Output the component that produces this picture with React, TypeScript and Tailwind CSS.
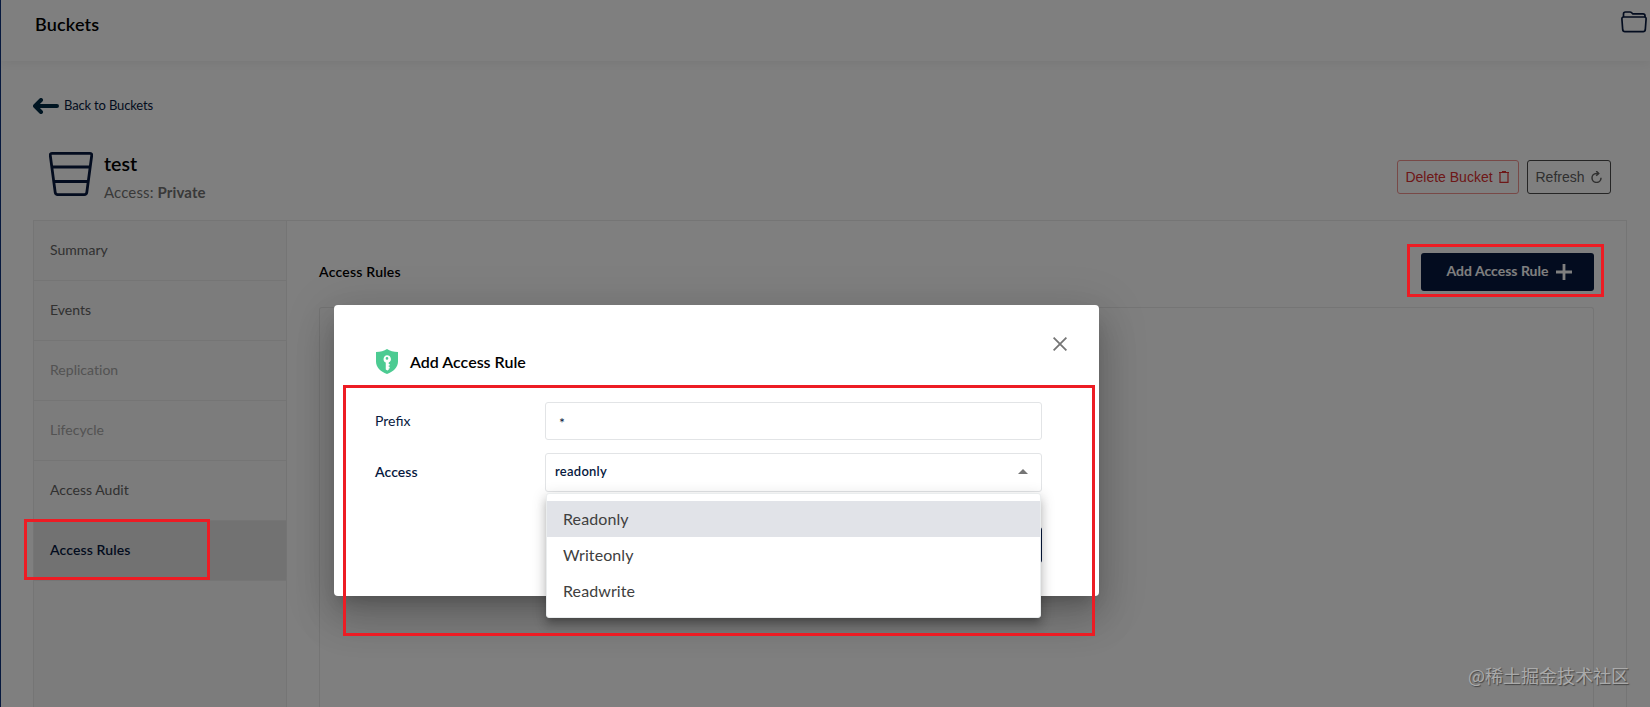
const tabs = [
  { label: "Summary" },
  { label: "Events" },
  { label: "Replication", disabled: true },
  { label: "Lifecycle", disabled: true },
  { label: "Access Audit" },
  { label: "Access Rules", selected: true },
];

const options = ["Readonly", "Writeonly", "Readwrite"];

function tabClass(tab: { disabled?: boolean; selected?: boolean }) {
  if (tab.selected) return "bg-[#e5e5e5] font-semibold tracking-[0.008em] text-[#07193e]";
  if (tab.disabled) return "tracking-[0.002em] text-[#a6a6a6]";
  return "tracking-[0.002em] text-[#626262]";
}

function BucketIcon() {
  return (
    <svg width="44" height="44" viewBox="0 0 44 44" fill="none" stroke="#07193e" strokeWidth="2.800" strokeLinejoin="round">
      <path d="M3.200 1.400h37.600q2.200 0 1.900 2.200l-4.900 36.800q-.3 2.200-2.500 2.200H8.700q-2.200 0-2.500-2.200l-4.900-36.800q-.3-2.200 1.900-2.200z" />
      <path d="M3.400 15h37.200M5.400 29.500h33.200" />
    </svg>
  );
}

function Header() {
  return (
    <header className="relative flex h-[61px] justify-between bg-white pl-[34px] shadow-[0_3px_10px_rgba(0,0,0,0.06)]">
      <h1 className="pt-2.5 text-[18px] leading-7 font-semibold tracking-[0.01em] text-black">Buckets</h1>
      <svg className="mt-[11px] mr-[3px]" width="26" height="22" viewBox="0 0 26 22" fill="none" stroke="#07193e" strokeWidth="1.700" strokeLinejoin="round">
        <path d="M2.500 6V3q0-2 2-2h4.500q1 0 1.700.8l.9 1H22q2 0 2 2V6" />
        <path d="M2.800 6h20.400q2 0 1.900 2l-.8 10.700q-.2 2-2.200 2H3.900q-2 0-2.200-2L.9 8Q.8 6 2.800 6z" />
      </svg>
    </header>
  );
}

function BucketHeading() {
  return (
    <div className="flex h-[68px] items-start justify-between pr-4 pl-4">
      <div className="flex">
        <BucketIcon />
        <div className="pl-[11px]">
          <h2 className="h-[26px] text-[19.500px] leading-6 font-semibold text-black">test</h2>
          <p className="mt-px text-[15px] leading-[26px] tracking-[0.008em] text-[#737373]">
            Access: <b>Private</b>
          </p>
        </div>
      </div>
      <div className="mt-2 flex gap-2 font-['Liberation_Sans',sans-serif] text-[14px]">
        <button className="flex h-[34px] w-[122px] items-center justify-center gap-1.5 rounded-[3px] border border-[#f0928e] pr-0.5 text-[#dc3030]">
          Delete Bucket
          <svg width="10" height="12" viewBox="0 0 10 12" fill="none" stroke="currentColor" strokeWidth="1.200">
            <path d="M0 1.500h10M3 .6h4M1 1.500v9.900h8V1.500" />
          </svg>
        </button>
        <button className="flex h-[34px] w-[84px] items-center justify-center gap-1.5 rounded-[3px] border border-[#4a4a4a] pr-px text-[#606060]">
          Refresh
          <svg width="11" height="12" viewBox="0 0 11 12" fill="none" stroke="currentColor" strokeWidth="1.500">
            <path d="M7.500 2.400H5.400A4.500 4.500 0 1 0 10 6.800" />
            <path d="M5.200 0l2.500 2.400-2.500 2.400" />
          </svg>
        </button>
      </div>
    </div>
  );
}

function Panel() {
  return (
    <div className="flex h-[487px] border border-b-0 border-[#eaeaea]">
      <nav className="w-[253px] shrink-0 border-r border-[#eaeaea] bg-[#f8f8f8]">
        {tabs.map((tab) => (
          <div key={tab.label} className={`flex h-[60px] items-center border-b border-[#eaeaea] pb-0.5 pl-4 text-[14px] ${tabClass(tab)}`}>
            {tab.label}
          </div>
        ))}
      </nav>
      <div className="flex flex-1 flex-col px-8 pt-8">
        <div className="flex h-[54px] items-start justify-between">
          <h3 className="pt-[9px] text-[14px] leading-5 font-semibold tracking-[0.016em] text-black">Access Rules</h3>
          <button className="flex h-[38px] w-[173px] items-center justify-center gap-2 rounded-[3px] bg-[#07193e] pb-px pl-1 text-[14px] font-bold text-white">
            <span className="pb-0.5">Add Access Rule</span>
            <svg width="16" height="16" viewBox="0 0 16 16" stroke="currentColor" strokeWidth="2.800">
              <path d="M8 0v16M0 8h16" />
            </svg>
          </button>
        </div>
        <div className="flex-1 rounded-t-[3px] border border-b-0 border-[#eaeaea]" />
      </div>
    </div>
  );
}

function Dialog() {
  return (
    <div className="absolute top-[305px] left-[333px] h-[291px] w-[765px] rounded bg-white pt-11 pl-[41px] shadow-[0_11px_15px_-7px_rgba(0,0,0,0.2),0_24px_38px_3px_rgba(0,0,0,0.14),0_9px_46px_8px_rgba(0,0,0,0.12)]">
      <svg className="absolute top-8 right-8" width="14" height="14" viewBox="0 0 14 14" stroke="#757575" strokeWidth="1.800">
        <path d="M.6.6l12.800 12.800M13.400.6L.6 13.400" />
      </svg>
      <div className="flex h-[53px] gap-[11px] pl-px">
        <svg width="22" height="25" viewBox="0 0 23 26">
          <path fill="#4ccb92" d="M11.500 0Q16 3 23 3v10c0 6-4.500 10.500-11.500 13C4.500 23.500 0 19 0 13V3q7 0 11.500-3z" />
          <path fill="#fff" fillRule="evenodd" d="M11.500 6.500a4 4 0 0 1 1.800 7.600v1.400h1v1.700h-1v1.300h1v1.700h-1v1.300l-1.400 1-1.700-1.200v-7.200a4 4 0 0 1 1.300-7.600zm0 1.900a1.400 1.400 0 1 0 0 2.800 1.400 1.400 0 0 0 0-2.800z" />
        </svg>
        <h2 className="pl-px text-[16px] leading-[26px] font-semibold text-black">Add Access Rule</h2>
      </div>
      <div className="flex h-[38px] items-center text-[14px] text-[#07193e]">
        <label className="w-[170px] pb-0.5">Prefix</label>
        <div className="flex h-full w-[497px] items-center rounded-[3px] border border-[#e2e4e6] pt-0.5 pl-[13px] text-[14px]">*</div>
      </div>
      <div className="mt-[13px] flex h-[39px] items-center text-[14px] font-semibold text-[#07193e]">
        <label className="w-[170px] pb-0.5 tracking-[0.005em]">Access</label>
        <div className="flex h-full w-[497px] items-center justify-between rounded-[3px] border border-[#e2e4e6] pr-[13px] pb-0.5 pl-[9px] text-[13px] tracking-[0.02em]">
          readonly
          <span className="border-x-5 border-b-5 border-x-transparent border-b-[#757575]" />
        </div>
      </div>
      <div className="mt-[35px] ml-[597px] h-9 w-[70px] rounded-[3px] bg-[#07193e]" />
      <ul className="absolute top-[188px] left-[212px] h-[125px] w-[495px] rounded-[3px] border border-[#eaedee] bg-white pt-[7px] text-[16px] text-[#404040] shadow-[0_5px_5px_-3px_rgba(0,0,0,0.2),0_8px_10px_1px_rgba(0,0,0,0.14),0_3px_14px_2px_rgba(0,0,0,0.12)]">
        {options.map((option, i) => (
          <li key={option} className={`flex h-9 items-center pl-4 tracking-[0.006em] ${i === 0 ? "bg-[#e1e3e8]" : ""}`}>
            {option}
          </li>
        ))}
      </ul>
    </div>
  );
}

export default function App() {
  return (
    <div className="relative h-[707px] w-[1650px] overflow-hidden border-l border-[#07193e] bg-white font-[Lato,sans-serif]">
      <Header />
      <main className="pr-[23px] pl-8">
        <div className="flex h-[91px] items-start gap-[5px] pt-[34px] text-[13px] text-[#07193e]">
          <svg className="mt-[3px]" width="26" height="16" viewBox="0 0 26 16" fill="none" stroke="#002b45" strokeWidth="4" strokeLinecap="round" strokeLinejoin="round">
            <path d="M8 2L2 8l6 6M3 8h21" />
          </svg>
          <a className="leading-5 tracking-[-0.012em]">Back to Buckets</a>
        </div>
        <BucketHeading />
        <Panel />
      </main>

      <div className="absolute inset-0 -left-px bg-black/50" />
      <Dialog />

      {/* highlight frames */}
      <div className="absolute top-[244px] left-[1406px] h-[53px] w-[197px] border-3 border-[#ed1c24]" />
      <div className="absolute top-[519px] left-[23px] h-[61px] w-[186px] border-3 border-[#ed1c24]" />
      <div className="absolute top-[385px] left-[342px] h-[251px] w-[752px] border-3 border-[#ed1c24]" />
      <p className="absolute right-[21px] bottom-[19px] font-['Noto_Sans_CJK_SC',sans-serif] text-[18px] leading-[26px] whitespace-nowrap text-[#aaaaaa] [text-shadow:1px_1px_1px_#444]">
        @稀土掘金技术社区
      </p>
    </div>
  );
}
